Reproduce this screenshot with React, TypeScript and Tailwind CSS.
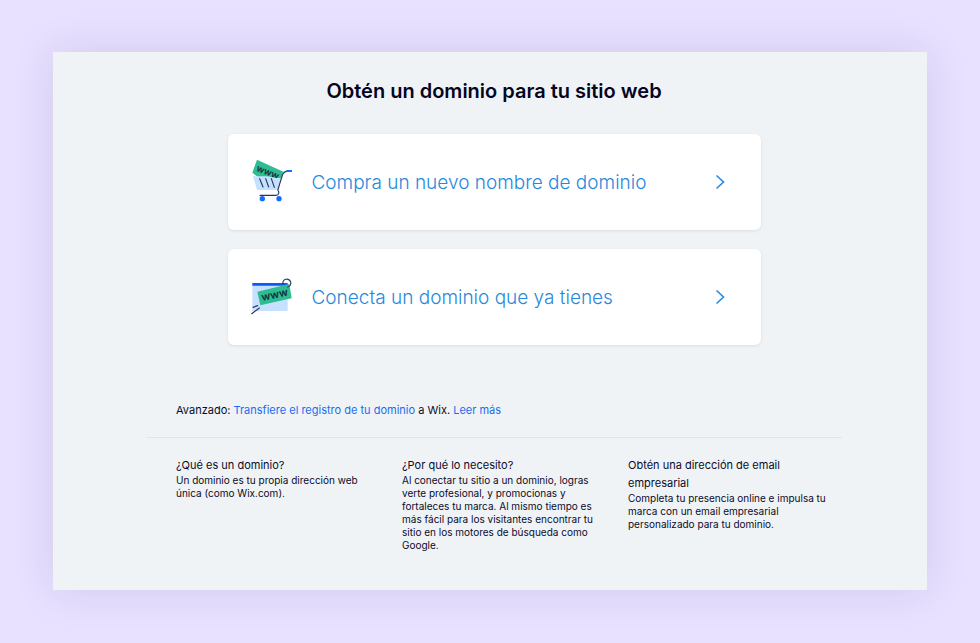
import React from "react";

interface DomainOptionProps {
  label: string;
  href: string;
  icon: React.ReactNode;
}

interface FaqItem {
  title: string;
  body: string;
}

const FAQ: FaqItem[] = [
  {
    title: "¿Qué es un dominio?",
    body: "Un dominio es tu propia dirección web única (como Wix.com).",
  },
  {
    title: "¿Por qué lo necesito?",
    body: "Al conectar tu sitio a un dominio, logras verte profesional, y promocionas y fortaleces tu marca. Al mismo tiempo es más fácil para los visitantes encontrar tu sitio en los motores de búsqueda como Google.",
  },
  {
    title: "Obtén una dirección de email empresarial",
    body: "Completa tu presencia online e impulsa tu marca con un email empresarial personalizado para tu dominio.",
  },
];

function CartIcon() {
  return (
    <svg viewBox="30 42 132 135" className="w-11 h-[45px] shrink-0 overflow-visible" fill="none" aria-hidden="true">
      <path d="M51 41 L130 77 L121 104 L72 108 L37 80 Z" fill="#2dbd91" />
      <text
        x="47"
        y="74"
        transform="rotate(22 47 74)"
        fontSize="28"
        fontWeight="600"
        fill="#162d3d"
        fontFamily="Inter, sans-serif"
      >
        www
      </text>
      <path d="M39 91 H82 L110 96 H123 L116 132 H51 Z" fill="#c5e1ff" />
      <path
        d="M59 98 L69 123 M77 98 L86 123 M94 98 L103 124"
        stroke="#2b3c66"
        strokeWidth="3.5"
        strokeLinecap="round"
      />
      <path
        d="M141 76 C132 76 130 80 127 88 L114 130 C112 137 119 134 116 142 C115 147 113 148 108 148 H60"
        stroke="#2b3560"
        strokeWidth="3.5"
        strokeLinecap="round"
      />
      <path d="M139 75 H156" stroke="#116dff" strokeWidth="6" />
      <circle cx="67" cy="158" r="8" fill="#116dff" />
      <circle cx="117" cy="158" r="8" fill="#116dff" />
    </svg>
  );
}

function BrowserTagIcon() {
  return (
    <svg viewBox="30 36 132 114" className="w-11 h-[38px] shrink-0" fill="none" aria-hidden="true">
      <path d="M37 51 H143 V135 H37 Z" fill="#c5e1ff" />
      <path d="M37 51 H143 V59 H37 Z" fill="#0a5cf5" />
      <path d="M52 77 L148 54 L155 97 L61 118 Z" fill="#2dbd91" />
      <path d="M129 55 A12 12 0 1 1 143 63" stroke="#2b3c66" strokeWidth="3.5" strokeLinecap="round" />
      <text
        x="67"
        y="105"
        transform="rotate(-12 67 105)"
        fontSize="32"
        fontWeight="600"
        fill="#162d3d"
        fontFamily="Inter, sans-serif"
      >
        www
      </text>
      <path d="M39 124 L53 119 M35 143 L58 126" stroke="#2b3c66" strokeWidth="3.5" strokeLinecap="round" />
    </svg>
  );
}

function DomainOption({ label, href, icon }: DomainOptionProps) {
  return (
    <a
      href={href}
      className="flex items-center gap-[18px] min-h-24 pl-[22px] pr-9 bg-white rounded-md shadow-[0_1px_3px_rgba(22,45,61,0.1)]"
    >
      {icon}
      <span className="flex-1 pt-0.5 text-[19px] leading-6 font-light text-[#2788dc]">{label}</span>
      <svg viewBox="0 0 10 16" className="w-[10px] h-4 shrink-0" fill="none" aria-hidden="true">
        <path d="M1.5 1.5 L8.5 8 L1.5 14.5" stroke="#2788dc" strokeWidth="1.6" />
      </svg>
    </a>
  );
}

export default function App() {
  return (
    <div className="min-h-screen bg-[#e8e1ff] px-[53px] pt-[52px] pb-[53px] flex font-['Inter','Liberation_Sans',sans-serif] text-[#0b0b2b]">
      <main className="flex-1 bg-[#eff3f6] pl-2 pt-6 pb-9 shadow-[0_0_40px_rgba(60,30,110,0.12)]">
        <h1 className="text-center text-xl leading-[30px] font-semibold text-[#05051f]">
          Obtén un dominio para tu sitio web
        </h1>

        {/* Domain choices */}
        <div className="max-w-[533px] mx-auto mt-7 flex flex-col gap-[19px]">
          <DomainOption label="Compra un nuevo nombre de dominio" href="#comprar" icon={<CartIcon />} />
          <DomainOption label="Conecta un dominio que ya tienes" href="#conectar" icon={<BrowserTagIcon />} />
        </div>

        {/* Advanced options and help */}
        <div className="max-w-[696px] mx-auto mt-14">
          <p className="px-[30px] pb-[18px] text-[11px] leading-[18px] border-b border-[#e1e5e9]">
            Avanzado:{" "}
            <a href="#transferir" className="text-[#1a6cf0]">
              Transfiere el registro de tu dominio
            </a>{" "}
            a Wix.{" "}
            <a href="#leer-mas" className="text-[#1a6cf0]">
              Leer más
            </a>
          </p>

          <div className="grid grid-cols-3 gap-7 pl-[30px] pr-4 pt-[18px]">
            {FAQ.map((item) => (
              <section key={item.title}>
                <h2 className="text-[11px] leading-[18px]">{item.title}</h2>
                <p className="text-[10px] leading-[13px]">{item.body}</p>
              </section>
            ))}
          </div>
        </div>
      </main>
    </div>
  );
}
